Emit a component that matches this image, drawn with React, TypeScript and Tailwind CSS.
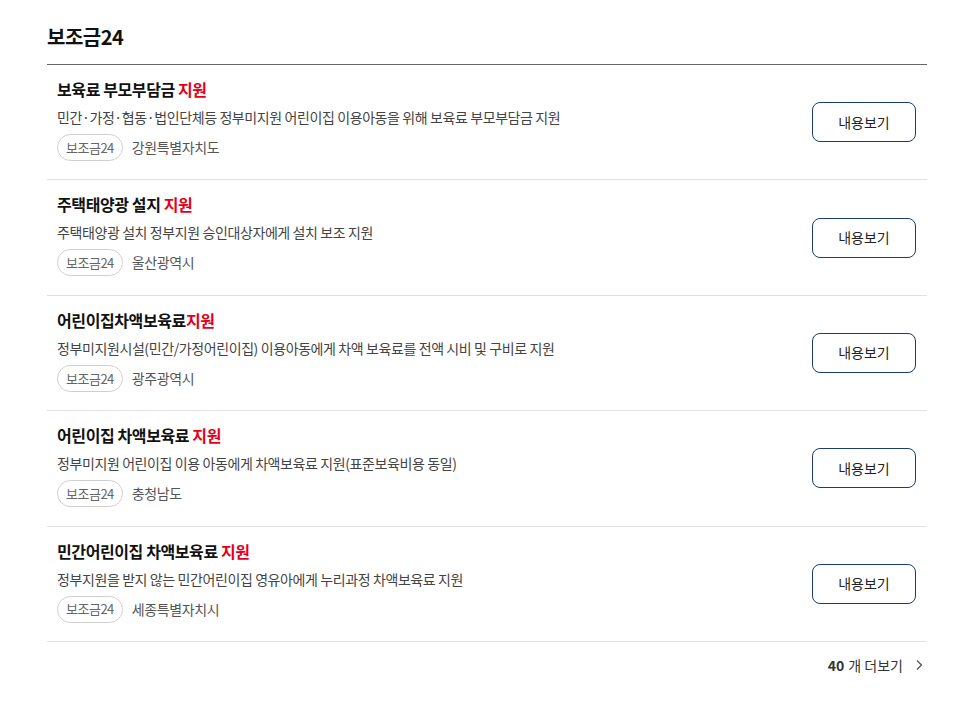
import React from "react";

const items = [
  { title: "보육료 부모부담금 ", red: "지원", desc: "민간·가정·협동·법인단체등 정부미지원 어린이집 이용아동을 위해 보육료 부모부담금 지원", region: "강원특별자치도" },
  { title: "주택태양광 설지 ", red: "지원", desc: "주택태양광 설치 정부지원 승인대상자에게 설치 보조 지원", region: "울산광역시" },
  { title: "어린이집차액보육료", red: "지원", desc: "정부미지원시설(민간/가정어린이집) 이용아동에게 차액 보육료를 전액 시비 및 구비로 지원", region: "광주광역시" },
  { title: "어린이집 차액보육료 ", red: "지원", desc: "정부미지원 어린이집 이용 아동에게 차액보육료 지원(표준보육비용 동일)", region: "충청남도" },
  { title: "민간어린이집 차액보육료 ", red: "지원", desc: "정부지원을 받지 않는 민간어린이집 영유아에게 누리과정 차액보육료 지원", region: "세종특별자치시" },
];

export default function App() {
  return (
    <div
      className="w-[973px] h-[710px] bg-white"
      style={{ fontFamily: '"Noto Sans CJK KR", "Noto Sans", sans-serif' }}
    >
      <div className="ml-[47px] w-[880px] pt-[22px]">
        <h2 className="text-[20px] leading-[30px] font-bold text-[#111] tracking-[-0.5px] pb-[12px]">보조금24</h2>
        <div className="border-t border-[#666]">
          {items.map((it, i) => (
            <div key={i} className="flex items-stretch justify-between border-b border-[#e2e2e2] pl-[10px] pr-[11px] h-[115.4px]">
              <div className="flex flex-col pt-[14px]">
                <div className="text-[16px] leading-[20px] font-bold text-[#111] tracking-[-0.4px]">
                  {it.title}
                  <span className="text-[#e4001b]">{it.red}</span>
                </div>
                <div className="mt-[7px] text-[14px] leading-[22px] text-[#444] tracking-[-0.4px]">{it.desc}</div>
                <div className="mt-[6px] flex items-center gap-[9px]">
                  <span className="h-[27px] px-[8px] flex items-center rounded-full border border-[#cfcfcf] text-[13px] text-[#666] tracking-[-0.5px]">보조금24</span>
                  <span className="text-[14px] text-[#555] tracking-[-0.4px]">{it.region}</span>
                </div>
              </div>
              <button className="self-center w-[104px] h-[40px] rounded-[8px] border border-[#1b3c73] text-[14px] text-[#222] bg-white">내용보기</button>
            </div>
          ))}
        </div>
        <div className="flex justify-end items-center pt-[13px] pr-[4px] text-[14px] text-[#333]">
          <span className="font-bold">40</span>
          <span className="ml-[4px]">개 더보기</span>
          <svg className="ml-[12px]" width="8" height="12" viewBox="0 0 8 12" fill="none">
            <path d="M2 1.5 L6.5 6 L2 10.5" stroke="#555" strokeWidth="1.3" />
          </svg>
        </div>
      </div>
    </div>
  );
}
